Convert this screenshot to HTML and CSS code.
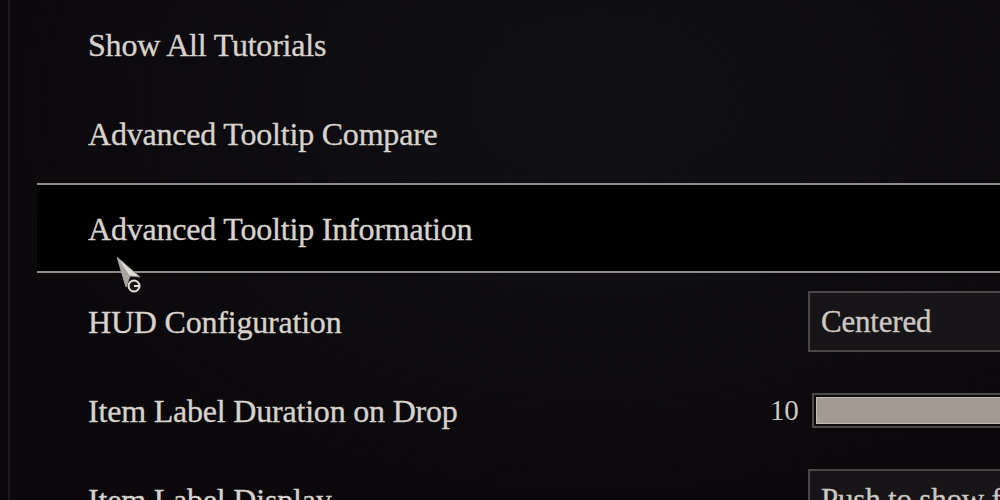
FILE: index.html
```html
<!DOCTYPE html>
<html lang="en">
<head>
<meta charset="utf-8">
<title>Gameplay Options</title>
<link rel="stylesheet" href="styles.css">
</head>
<body>
<div class="screen">
  <div class="edge"></div>
  <ul class="options">
    <li class="row"><span class="label">Show All Tutorials</span></li>
    <li class="row"><span class="label">Advanced Tooltip Compare</span></li>
    <li class="row active">
      <span class="label">Advanced Tooltip Information</span>
      <svg class="cursor" width="28" height="38" viewBox="0 0 28 38">
        <path d="M1 1 L24 21 L14 20 L10 31 Z" fill="#dedad6" stroke="#8f8b88" stroke-width="1"/>
        <path d="M1 1 L14 20 L10 31 Z" fill="#a9a5a1"/>
        <circle cx="18" cy="30" r="5.5" fill="#1a1818" stroke="#e6e2de" stroke-width="2"/>
        <path d="M18 30 H23" stroke="#e6e2de" stroke-width="2"/>
      </svg>
    </li>
    <li class="row">
      <span class="label">HUD Configuration</span>
      <div class="control dropdown"><span>Centered</span></div>
    </li>
    <li class="row">
      <span class="label">Item Label Duration on Drop</span>
      <div class="control slider">
        <span class="value">10</span>
        <div class="track"><div class="fill" style="width: 100%"></div></div>
      </div>
    </li>
    <li class="row">
      <span class="label">Item Label Display</span>
      <div class="control dropdown"><span>Push to show full</span></div>
    </li>
  </ul>
</div>
</body>
</html>
```

FILE: styles.css
```css
html, body {
  margin: 0;
  padding: 0;
  width: 1000px;
  height: 500px;
  overflow: hidden;
  background: #0c0a0d;
}

.screen {
  display: flex;
  height: 500px;
  background: radial-gradient(ellipse at 60% 20%, #111015 0%, #0b090c 70%);
}

.edge {
  flex: 0 0 2px;
  margin-left: 8px;
  background: #1d1a1e;
}

.options {
  list-style: none;
  margin: 0 0 0 27px;
  padding: 0;
  flex: 1;
  display: flex;
  flex-direction: column;
}

.row {
  position: relative;
  flex: 0 0 89px;
  display: flex;
  align-items: center;
  padding-left: 51px;
  font-family: "Liberation Serif", "Times New Roman", serif;
  font-size: 32px;
  letter-spacing: -0.2px;
  color: #d8d2cc;
  -webkit-text-stroke: 0.35px #d8d2cc;
  text-shadow: 0 0 1px rgba(0, 0, 0, 0.8);
}

.row.active {
  flex-basis: 90px;
  box-sizing: border-box;
  margin: 5px 0 4px;
  background: #010101;
  border-top: 2px solid #918c87;
  border-bottom: 2px solid #918c87;
}

.label {
  padding-top: 2px;
}

.cursor {
  position: absolute;
  left: 79px;
  top: 71px;
}

.control {
  margin-left: auto;
  margin-right: -38px;
  display: flex;
  align-items: center;
}

.dropdown {
  flex: 0 0 230px;
  box-sizing: border-box;
  height: 61px;
  border: 2px solid #4a4647;
  background: #171517;
  padding-left: 11px;
  font-size: 31px;
  color: #cdc8c3;
  -webkit-text-stroke: 0.35px #cdc8c3;
}

.slider {
  flex: 0 0 268px;
  gap: 13px;
}

.value {
  flex: 0 0 27px;
  text-align: right;
  font-size: 29px;
  color: #cfc9c3;
  -webkit-text-stroke: 0;
}

.track {
  flex: 1;
  height: 35px;
  box-sizing: border-box;
  border: 2px solid #4c4a49;
  background: #0e0c0c;
  padding: 2px;
}

.fill {
  height: 100%;
  box-sizing: border-box;
  border: 1px solid #c4bdb6;
  background: #a39a92;
}
```
